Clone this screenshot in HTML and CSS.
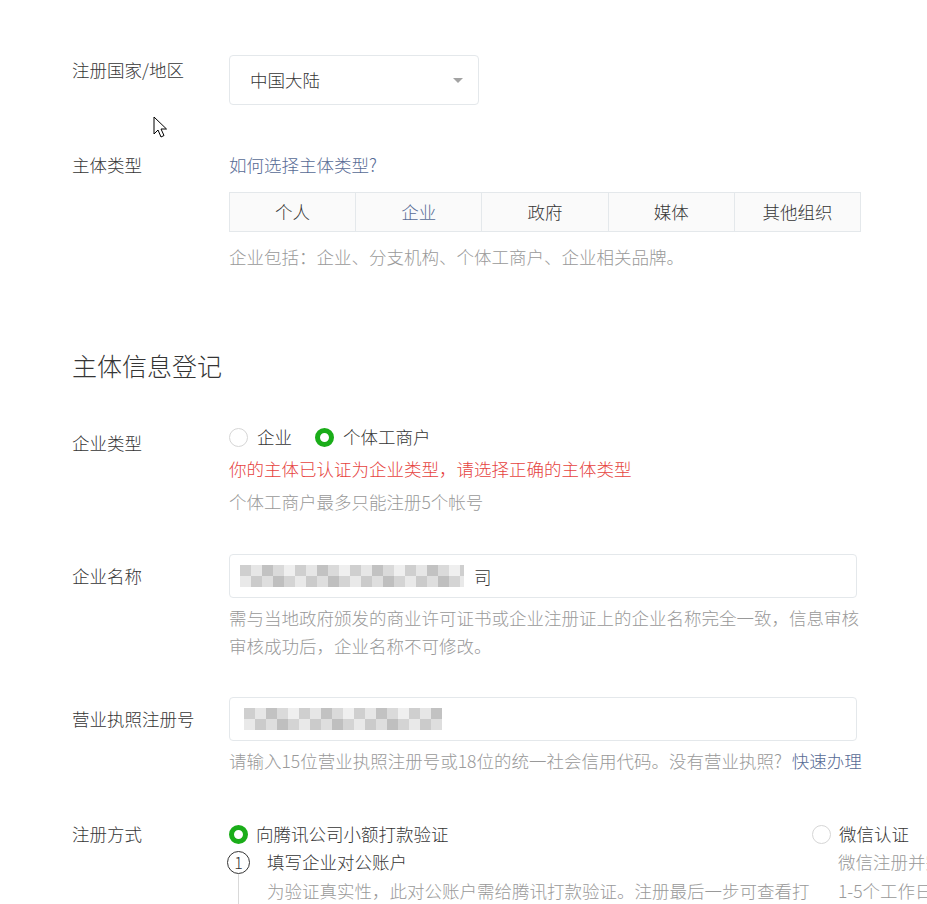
FILE: index.html
```html
<!DOCTYPE html>
<html lang="zh-CN">
<head>
    <meta charset="UTF-8">
    <title>主体信息登记</title>
    <link rel="stylesheet" href="styles.css">
</head>
<body>

<div class="page">

    <div class="row">
        <div class="label label-top">注册国家/地区</div>
        <div class="field">
            <div class="select">
                <span>中国大陆</span>
                <i class="arrow"></i>
            </div>
        </div>
    </div>

    <div class="row row-type">
        <div class="label">主体类型</div>
        <div class="field">
            <a class="link" href="#">如何选择主体类型?</a>
            <div class="tabs">
                <div class="tab">个人</div>
                <div class="tab active">企业</div>
                <div class="tab">政府</div>
                <div class="tab">媒体</div>
                <div class="tab">其他组织</div>
            </div>
            <div class="hint hint-tabs">企业包括：企业、分支机构、个体工商户、企业相关品牌。</div>
        </div>
    </div>

    <h2 class="title">主体信息登记</h2>

    <div class="row row-kind">
        <div class="label label-pad">企业类型</div>
        <div class="field">
            <div class="radios">
                <label class="radio"><i class="dot"></i>企业</label>
                <label class="radio checked"><i class="dot"></i>个体工商户</label>
            </div>
            <div class="error">你的主体已认证为企业类型，请选择正确的主体类型</div>
            <div class="hint hint-kind">个体工商户最多只能注册5个帐号</div>
        </div>
    </div>

    <div class="row row-name">
        <div class="label label-pad">企业名称</div>
        <div class="field">
            <div class="input"><span class="mosaic mosaic-name"></span>司</div>
            <div class="hint hint-input">需与当地政府颁发的商业许可证书或企业注册证上的企业名称完全一致，信息审核审核成功后，企业名称不可修改。</div>
        </div>
    </div>

    <div class="row row-license">
        <div class="label label-pad">营业执照注册号</div>
        <div class="field">
            <div class="input"><span class="mosaic mosaic-license"></span></div>
            <div class="hint hint-input hint-nowrap">请输入15位营业执照注册号或18位的统一社会信用代码。没有营业执照? <a class="link link-fast" href="#">快速办理</a></div>
        </div>
    </div>

    <div class="row row-method">
        <div class="label">注册方式</div>
        <div class="methods">
            <div class="method method-left">
                <label class="radio checked"><i class="dot"></i>向腾讯公司小额打款验证</label>
                <div class="step">
                    <div class="step-side">
                        <span class="step-num">1</span>
                        <span class="step-line"></span>
                    </div>
                    <div class="step-body">
                        <div class="step-title">填写企业对公账户</div>
                        <div class="step-desc">为验证真实性，此对公账户需给腾讯打款验证。注册最后一步可查看打款金额。</div>
                    </div>
                </div>
            </div>
            <div class="method method-right">
                <label class="radio"><i class="dot"></i>微信认证</label>
                <div class="method-desc first">微信注册并完成微信认证，需支付300元审核费用</div>
                <div class="method-desc">1-5个工作日完成审核</div>
            </div>
        </div>
    </div>

    <svg class="cursor" width="16" height="24" viewBox="0 0 16 24">
        <path d="M1 1 L1 18 L5 14 L8 21 L11 19.5 L8 13 L13.5 13 Z" fill="#fff" stroke="#000" stroke-width="1"/>
    </svg>

</div>

</body>
</html>
```

FILE: styles.css
```css
html, body{
    margin: 0;
    overflow: hidden;
    background: #fff;
}

body{
    font-family: "Noto Sans CJK SC", "Microsoft YaHei", sans-serif;
    font-size: 17.5px;
    font-weight: 300;
    color: #353535;
}

a{ text-decoration: none; }

.page{
    position: relative;
    width: 1200px;
    padding: 55px 0 0 72px;
}

.row{ display: flex; }

.label{
    width: 157px;
    flex-shrink: 0;
    line-height: 28px;
}
.label-top{ padding-top: 1px; }
.label-pad{ padding-top: 8px; }

.field{ width: 632px; }

.link{ color: #576b95; line-height: 28px; }
.link-fast{ margin-left: 6px; }

.hint{
    color: #999;
    line-height: 28px;
}
.hint-nowrap{ white-space: nowrap; }

/* select */
.select{
    position: relative;
    box-sizing: border-box;
    width: 250px;
    height: 50px;
    border: 1px solid #e4e8eb;
    border-radius: 4px;
    padding-left: 20px;
    line-height: 48px;
}
.arrow{
    position: absolute;
    right: 15px;
    top: 22px;
    border-left: 5px solid transparent;
    border-right: 5px solid transparent;
    border-top: 5px solid #a3a3a3;
}

/* tabs */
.row-type{ margin-top: 46px; }
.tabs{
    display: flex;
    box-sizing: border-box;
    height: 40px;
    margin-top: 13px;
    border: 1px solid #e4e8eb;
    background: #fafafa;
}
.tab{
    flex: 1;
    text-align: center;
    line-height: 38px;
    border-left: 1px solid #e4e8eb;
}
.tab:first-child{ border-left: none; }
.tab.active{ color: #576b95; }
.hint-tabs{ margin-top: 11px; }

.title{
    margin: 76px 0 0;
    font-size: 25px;
    font-weight: 300;
    line-height: 36px;
}

/* radios */
.row-kind{ margin-top: 38px; }
.radios{
    display: flex;
    gap: 23px;
    line-height: 32px;
}
.radio{
    display: flex;
    align-items: center;
    line-height: 28px;
}
.radios .radio{ line-height: 32px; }
.dot{
    box-sizing: border-box;
    width: 19px;
    height: 19px;
    margin-right: 9px;
    border: 1px solid #d6d6d6;
    border-radius: 50%;
    background: #fff;
}
.radio.checked .dot{ border: 5px solid #1aad19; }

.error{
    color: #e64340;
    line-height: 32px;
}
.hint-kind{
    margin-top: 1px;
    line-height: 32px;
}

/* inputs */
.row-name{ margin-top: 36px; }
.row-license{ margin-top: 37px; }
.input{
    display: flex;
    align-items: center;
    box-sizing: border-box;
    width: 628px;
    height: 44px;
    padding-left: 10px;
    border: 1px solid #e4e8eb;
    border-radius: 4px;
}
.hint-input{ margin-top: 6px; }

.mosaic{
    display: inline-block;
    height: 22px;
    background:
        repeating-linear-gradient(90deg, #cfcfcf 0 11px, #e6e6e6 11px 22px, #c2c2c2 22px 33px, #dadada 33px 44px, #efefef 44px 55px) top / 100% 11px no-repeat,
        repeating-linear-gradient(90deg, #e9e9e9 0 11px, #cbcbcb 11px 22px, #dedede 22px 33px, #bfbfbf 33px 44px, #d4d4d4 44px 55px) bottom / 100% 11px no-repeat;
}
.mosaic-name{ width: 224px; margin-right: 10px; }
.mosaic-license{ width: 198px; margin-left: 4px; }

/* register method */
.row-method{ margin-top: 45px; }
.methods{ display: flex; }
.method-left{ width: 583px; flex-shrink: 0; }
.method .radio .dot{ margin-right: 8px; }
.method-right{ white-space: nowrap; }
.method-desc{
    padding-left: 26px;
    color: #999;
    line-height: 30px;
}
.method-desc.first{ line-height: 28px; }

.step{ display: flex; }
.step-side{
    display: flex;
    flex-direction: column;
    width: 38px;
    flex-shrink: 0;
}
.step-num{
    box-sizing: border-box;
    width: 23px;
    height: 23px;
    margin: 3px 0 0 -2px;
    border: 1px solid #353535;
    border-radius: 50%;
    text-align: center;
    font-size: 16px;
    line-height: 21px;
}
.step-line{
    flex: 1;
    width: 1px;
    margin-left: 9px;
    background: #d9d9d9;
}
.step-title{ line-height: 28px; }
.step-desc{
    color: #999;
    line-height: 30px;
}

.cursor{
    position: absolute;
    left: 153px;
    top: 116px;
}
```
